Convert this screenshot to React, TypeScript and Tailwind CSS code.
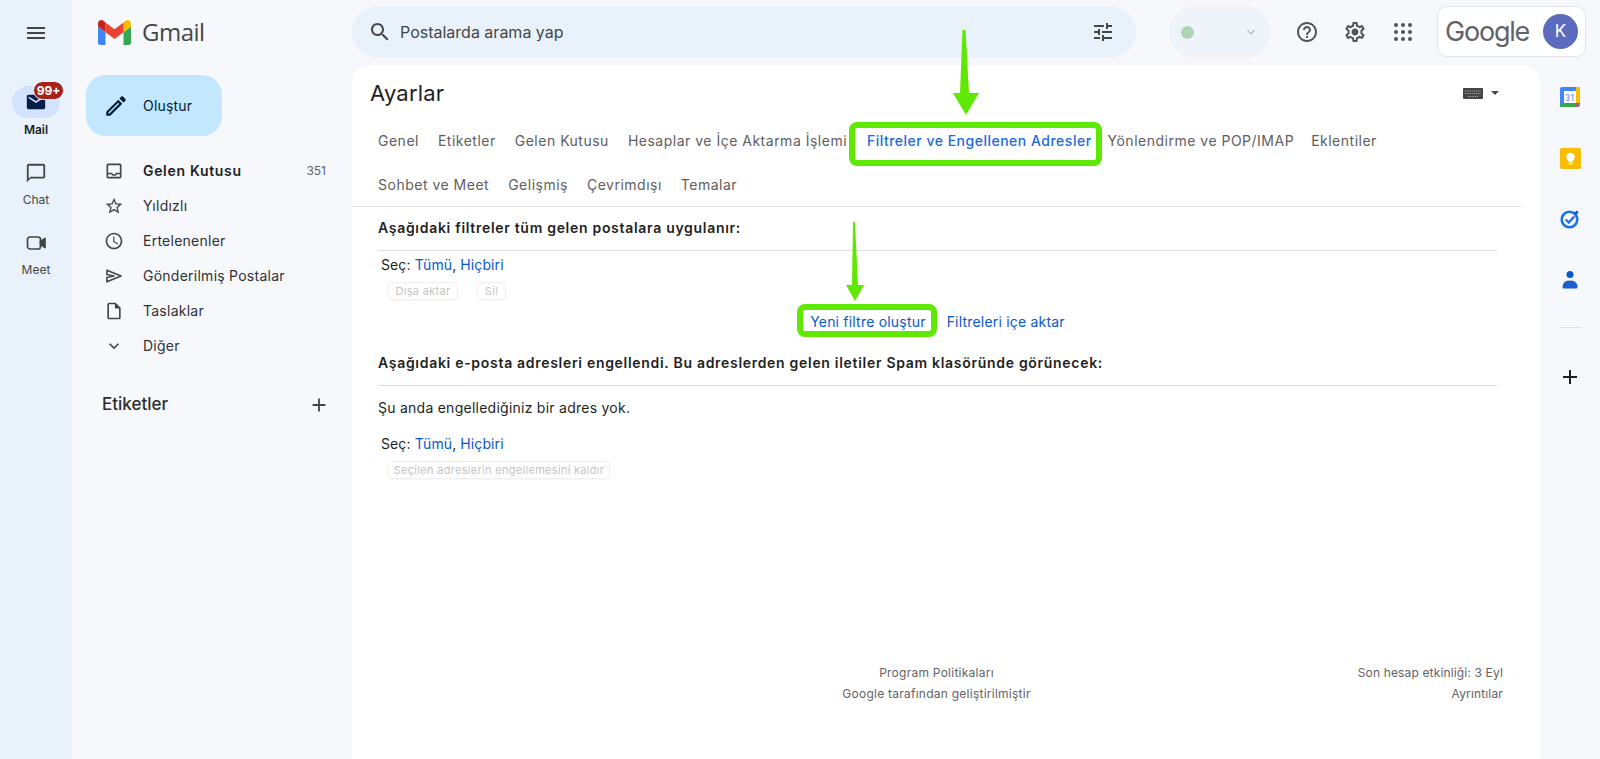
import React from "react";

const P = {
  menu: "M3 18h18v-2H3v2zm0-5h18v-2H3v2zm0-7v2h18V6H3z",
  search: "M15.5 14h-.79l-.28-.27C15.41 12.59 16 11.11 16 9.5 16 5.91 13.09 3 9.5 3S3 5.91 3 9.5 5.91 16 9.5 16c1.61 0 3.09-.59 4.23-1.57l.27.28v.79l5 4.99L20.49 19l-4.99-5zm-6 0C7.01 14 5 11.99 5 9.5S7.01 5 9.5 5 14 7.01 14 9.5 11.99 14 9.5 14z",
  tune: "M3 17v2h6v-2H3zM3 5v2h10V5H3zm10 16v-2h8v-2h-8v-2h-2v6h2zM7 9v2H3v2h4v2h2V9H7zm14 4v-2H11v2h10zm-6-4h2V7h4V5h-4V3h-2v6z",
  help: "M11 18h2v-2h-2v2zm1-16C6.48 2 2 6.48 2 12s4.48 10 10 10 10-4.48 10-10S17.52 2 12 2zm0 18c-4.41 0-8-3.59-8-8s3.59-8 8-8 8 3.59 8 8-3.59 8-8 8zm0-14c-2.21 0-4 1.79-4 4h2c0-1.1.9-2 2-2s2 .9 2 2c0 2-3 1.75-3 5h2c0-2.25 3-2.5 3-5 0-2.21-1.79-4-4-4z",
  gear: "M19.43 12.98c.04-.32.07-.64.07-.98 0-.34-.03-.66-.07-.98l2.11-1.65c.19-.15.24-.42.12-.64l-2-3.46c-.09-.16-.26-.25-.44-.25-.06 0-.12.01-.17.03l-2.49 1c-.52-.4-1.08-.73-1.69-.98l-.38-2.65C14.46 2.18 14.25 2 14 2h-4c-.25 0-.46.18-.49.42l-.38 2.65c-.61.25-1.17.59-1.69.98l-2.49-1c-.06-.02-.12-.03-.18-.03-.17 0-.34.09-.43.25l-2 3.46c-.13.22-.07.49.12.64l2.11 1.65c-.04.32-.07.65-.07.98 0 .33.03.66.07.98l-2.11 1.65c-.19.15-.24.42-.12.64l2 3.46c.09.16.26.25.44.25.06 0 .12-.01.17-.03l2.49-1c.52.4 1.08.73 1.69.98l.38 2.65c.03.24.24.42.49.42h4c.25 0 .46-.18.49-.42l.38-2.65c.61-.25 1.17-.59 1.69-.98l2.49 1c.06.02.12.03.18.03.17 0 .34-.09.43-.25l2-3.46c.12-.22.07-.49-.12-.64l-2.11-1.65zm-1.98-1.71c.04.31.05.52.05.73 0 .21-.02.43-.05.73l-.14 1.13.89.7 1.08.84-.7 1.21-1.27-.51-1.04-.42-.9.68c-.43.32-.84.56-1.25.73l-1.06.43-.16 1.13-.2 1.35h-1.4l-.19-1.35-.16-1.13-1.06-.43c-.43-.18-.83-.41-1.23-.71l-.91-.7-1.06.43-1.27.51-.7-1.21 1.08-.84.89-.7-.14-1.13c-.03-.31-.05-.54-.05-.74s.02-.43.05-.73l.14-1.13-.89-.7-1.08-.84.7-1.21 1.27.51 1.04.42.9-.68c.43-.32.84-.56 1.25-.73l1.06-.43.16-1.13.2-1.35h1.39l.19 1.35.16 1.13 1.06.43c.43.18.83.41 1.23.71l.91.7 1.06-.43 1.27-.51.7 1.21-1.07.85-.89.7.14 1.13zM12 8.500c-1.93 0-3.500 1.570-3.500 3.500s1.570 3.500 3.500 3.500 3.500-1.570 3.500-3.500-1.570-3.500-3.500-3.500z",
  mail: "M20 4H4c-1.1 0-1.99.9-1.99 2L2 18c0 1.1.9 2 2 2h16c1.1 0 2-.9 2-2V6c0-1.1-.9-2-2-2zm0 4l-8 5-8-5V6l8 5 8-5v2z",
  chat: "M20 2H4c-1.1 0-2 .9-2 2v18l4-4h14c1.1 0 2-.9 2-2V4c0-1.1-.9-2-2-2zm0 14H6l-2 2V4h16v12z",
  inbox: "M19 3H5c-1.1 0-2 .9-2 2v14c0 1.1.9 2 2 2h14c1.1 0 2-.9 2-2V5c0-1.1-.9-2-2-2zm0 16H5v-3h3.56c.69 1.19 1.97 2 3.45 2s2.75-.81 3.45-2H19v3zm0-5h-4.99c0 1.1-.9 2-2 2s-2-.9-2-2H5V5h14v9z",
  star: "M22 9.24l-7.19-.62L12 2 9.19 8.63 2 9.24l5.46 4.73L5.82 21 12 17.27 18.18 21l-1.63-7.03L22 9.24zM12 15.4l-3.76 2.27 1-4.28-3.32-2.88 4.38-.38L12 6.1l1.71 4.04 4.38.38-3.32 2.88 1 4.28L12 15.4z",
  clock: "M11.99 2C6.47 2 2 6.48 2 12s4.47 10 9.99 10C17.52 22 22 17.52 22 12S17.52 2 11.99 2zM12 20c-4.42 0-8-3.58-8-8s3.58-8 8-8 8 3.58 8 8-3.58 8-8 8zm.5-13H11v6l5.25 3.15.75-1.23-4.5-2.67z",
  draft: "M14 2H6c-1.1 0-1.99.9-1.99 2L4 20c0 1.1.89 2 1.99 2H18c1.1 0 2-.9 2-2V8l-6-6zM6 20V4h7v5h5v11H6z",
  chevron: "M16.59 8.59L12 13.17 7.41 8.59 6 10l6 6 6-6z",
  plus: "M19 13h-6v6h-2v-6H5v-2h6V5h2v6h6v2z",
  pencil: "M3 17.25V21h3.75L17.81 9.94l-3.75-3.75L3 17.25zM5.92 19H5v-.92l9.06-9.06.92.92L5.92 19zM20.71 5.63l-2.34-2.34c-.2-.2-.45-.29-.71-.29s-.51.1-.7.29l-1.83 1.83 3.75 3.75 1.83-1.83c.39-.39.39-1.02 0-1.41z",
};

function Icon({ d, className }: { d: string; className: string }) {
  return (
    <svg viewBox="0 0 24 24" fill="currentColor" className={className}>
      <path d={d} fillRule="evenodd" />
    </svg>
  );
}

function SendIcon() {
  return (
    <svg viewBox="0 0 24 24" fill="none" stroke="currentColor" strokeWidth="1.9" strokeLinejoin="round" className="w-[20px] h-[20px] text-[#444746]">
      <path d="M3.500 5l17 7-17 7v-5.200L12 12 3.500 10.200z" />
    </svg>
  );
}

function VideoIcon() {
  return (
    <svg viewBox="0 0 24 24" fill="none" stroke="currentColor" strokeWidth="1.700" strokeLinejoin="round" className="mt-[22px] w-6 h-6 text-[#444746]">
      <rect x="3.500" y="6" width="13" height="12" rx="2.500" />
      <path d="M16.500 10.500 21 7.500v9l-4.500-3z" fill="currentColor" />
    </svg>
  );
}

function Rail() {
  return (
    <div className="w-[72px] shrink-0 bg-[#e9f1fb] flex flex-col items-center">
      <div className="h-[66px] flex items-center justify-center">
        <Icon d={P.menu} className="w-6 h-6 text-[#444746]" />
      </div>
      <div className="relative mt-[20px] w-[48px] h-[32px] rounded-full bg-[#d3e3fd] flex items-center justify-center">
        <Icon d={P.mail} className="w-[22px] h-[22px] text-[#041e49]" />
        <div className="absolute left-[21px] top-[-5px] w-[31px] h-[19px] rounded-full bg-[#a8201a] border border-[#e9f1fb] text-white text-[12px] font-bold leading-[17px] text-center">99+</div>
      </div>
      <div className="mt-[3px] h-[18px] text-[12px] leading-[18px] font-semibold text-[#1f1f1f]">Mail</div>
      <Icon d={P.chat} className="mt-[23px] w-[22px] h-[22px] text-[#444746]" />
      <div className="mt-[7px] h-[18px] text-[12px] leading-[18px] text-[#444746]">Chat</div>
      <VideoIcon />
      <div className="mt-[6px] h-[18px] text-[12px] leading-[18px] text-[#444746]">Meet</div>
    </div>
  );
}

function TopBar() {
  return (
    <div className="h-[66px] shrink-0 flex items-start">
      <div className="w-[280px] h-[64px] shrink-0 flex items-center pl-[26px]">
        <svg viewBox="52 42 88 66" className="w-[33px] h-[25px]">
          <path fill="#4285f4" d="M58 108h14V74L52 59v43c0 3.32 2.69 6 6 6" />
          <path fill="#34a853" d="M120 108h14c3.32 0 6-2.69 6-6V59l-20 15" />
          <path fill="#fbbc04" d="M120 48v26l20-15v-8c0-7.42-8.47-11.65-14.4-7.2" />
          <path fill="#ea4335" d="M72 74V48l24 18 24-18v26L96 92" />
          <path fill="#c5221f" d="M52 51v8l20 15V48l-5.6-4.2c-5.94-4.45-14.4-.22-14.4 7.2" />
        </svg>
        <span className="ml-[11px] text-[24px] text-[#444746] font-['Open_Sans',sans-serif] tracking-[-0.5px]">Gmail</span>
      </div>
      <div className="mt-[6px] w-[784px] h-[52px] shrink-0 rounded-[26px] bg-[#e9f1fb] flex items-center pl-[16px] pr-[21px]">
        <Icon d={P.search} className="w-6 h-6 text-[#444746]" />
        <span className="ml-[8px] text-[16px] text-[#444746]">Postalarda arama yap</span>
        <Icon d={P.tune} className="ml-auto w-6 h-6 text-[#444746]" />
      </div>
      <div className="ml-[33px] mt-[6px] w-[101px] h-[52px] shrink-0 rounded-[26px] bg-[#eff4fb] flex items-center pl-[12px] pr-[11px]">
        <div className="w-[13px] h-[13px] rounded-full bg-[#aed4b5]" />
        <Icon d={P.chevron} className="ml-auto w-[16px] h-[16px] text-[#b9c0c8]" />
      </div>
      <div className="ml-[25px] mt-[20px] flex items-center gap-[24px] text-[#50555a]">
        <Icon d={P.help} className="w-6 h-6" />
        <Icon d={P.gear} className="w-6 h-6" />
        <svg viewBox="0 0 20 20" fill="currentColor" className="mx-[2px] w-[20px] h-[20px]">
          {[3, 10, 17].map((y) => [3, 10, 17].map((x) => <circle key={`${x}-${y}`} cx={x} cy={y} r="2" />))}
        </svg>
      </div>
      <div className="ml-[22px] mt-[6px] w-[149px] h-[51px] shrink-0 rounded-[10px] bg-white border border-[#e1e3e8] flex items-center pl-[7px]">
        <span className="text-[27px] leading-none text-[#5f6368] tracking-[-1.2px]">Google</span>
        <div className="ml-auto mr-[7px] w-[35px] h-[35px] rounded-full bg-[#5c6bc0] text-white text-[17px] flex items-center justify-center">K</div>
      </div>
    </div>
  );
}

const navItems = [
  { d: P.inbox, t: "Gelen Kutusu", bold: true, count: "351" },
  { d: P.star, t: "Yıldızlı" },
  { d: P.clock, t: "Ertelenenler" },
  { d: "", t: "Gönderilmiş Postalar" },
  { d: P.draft, t: "Taslaklar" },
  { d: P.chevron, t: "Diğer" },
];

function Sidebar() {
  return (
    <div className="w-[280px] shrink-0 flex flex-col">
      <div className="ml-[14px] mt-[9px] w-[136px] h-[61px] rounded-[20px] bg-[#c2e7ff] flex items-center pl-[17px] text-[#001d35]">
        <Icon d={P.pencil} className="w-[26px] h-[26px]" />
        <span className="ml-[14px] text-[14px] tracking-[0.2px]">Oluştur</span>
      </div>
      <div className="mt-[17px] flex flex-col">
        {navItems.map((n) => (
          <div key={n.t} className="h-[35px] flex items-center pl-[32px] pr-[26px] text-[14px] text-[#303134]">
            {n.d ? <Icon d={n.d} className="w-[20px] h-[20px] text-[#444746]" /> : <SendIcon />}
            <span className={n.bold ? "ml-[19px] font-semibold tracking-[0.68px] text-[#1f1f1f]" : "ml-[19px] tracking-[0.25px]"}>{n.t}</span>
            {n.count && <span className="ml-auto text-[12px] text-[#5f6368]">{n.count}</span>}
          </div>
        ))}
      </div>
      <div className="mt-[22px] h-[40px] flex items-center justify-between pl-[30px] pr-[22px]">
        <span className="text-[17px] font-medium text-[#2d2e30]">Etiketler</span>
        <Icon d={P.plus} className="w-[22px] h-[22px] text-[#444746]" />
      </div>
    </div>
  );
}

function TabRow({ children, className }: { children: React.ReactNode; className: string }) {
  return <div className={`h-[42px] pb-[2px] flex items-center pl-[26px] text-[14px] tracking-[0.5px] text-[#5e5e5e] whitespace-nowrap ${className}`}>{children}</div>;
}

function Ghost({ t, className }: { t: string; className: string }) {
  return (
    <div className={`h-[18px] rounded-[4px] border border-[#f0f0f0] text-[11px] leading-[16px] tracking-[0.3px] text-center text-[#c4c4c4] shadow-[0_1px_1px_rgba(0,0,0,0.04)] ${className}`}>{t}</div>
  );
}

function Select() {
  return (
    <div className="h-[28px] pb-[2px] flex items-center pl-[3px] text-[14px] tracking-[0.1px] text-[#1f1f1f]">
      Seç:&nbsp;<span className="text-[#0b57d0]">Tümü</span>,&nbsp;<span className="text-[#0b57d0]">Hiçbiri</span>
    </div>
  );
}

function Settings() {
  return (
    <div className="relative flex-1 bg-white rounded-t-2xl flex flex-col">
      <div className="h-[54px] flex items-center pl-[18px] pr-[41px]">
        <span className="mt-[1px] text-[22px] tracking-[0.2px] text-[#1f1f1f]">Ayarlar</span>
        <svg viewBox="0 0 20 11" className="ml-auto w-[20px] h-[11px]">
          <rect width="20" height="11" rx="1" fill="#444746" />
          <path d="M2 3h16M2 5.500h16M5 8.500h10" stroke="#a8abb0" strokeWidth="1" strokeDasharray="1 0.8" />
        </svg>
        <div className="ml-[8px] w-0 h-0 border-x-[4px] border-x-transparent border-t-[4px] border-t-[#444746]" />
      </div>
      <div className="mr-[18px] border-b border-[#e8e8e8]">
        <TabRow className="gap-[19px]">
          <span>Genel</span>
          <span>Etiketler</span>
          <span>Gelen Kutusu</span>
          <span className="w-[222px]">Hesaplar ve İçe Aktarma İşlemi</span>
          <span className="-ml-[2px] text-[#1b6ae0] font-medium">Filtreler ve Engellenen Adresler</span>
          <span className="-ml-[3px]">Yönlendirme ve POP/IMAP</span>
          <span className="-ml-[2px]">Eklentiler</span>
        </TabRow>
        <TabRow className="gap-[19px] mt-[2px]">
          <span>Sohbet ve Meet</span>
          <span>Gelişmiş</span>
          <span>Çevrimdışı</span>
          <span>Temalar</span>
        </TabRow>
      </div>
      <div className="ml-[26px] w-[1119px] text-[14px]">
        <div className="h-[44px] pb-[3px] flex items-center border-b border-[#e0e0e0] font-semibold tracking-[0.7px] text-[#1f1f1f]">Aşağıdaki filtreler tüm gelen postalara uygulanır:</div>
        <Select />
        <div className="mt-[3px] ml-[10px] flex gap-[19px]">
          <Ghost t="Dışa aktar" className="w-[70px]" />
          <Ghost t="Sil" className="w-[29px]" />
        </div>
        <div className="mt-[5px] h-[34px] pb-[2px] flex items-center justify-center gap-[21px] tracking-[0.2px] text-[#0b57d0]">
          <span>Yeni filtre oluştur</span>
          <span>Filtreleri içe aktar</span>
        </div>
        <div className="mt-[3px] h-[44px] pb-[2px] flex items-center border-b border-[#e0e0e0] font-semibold tracking-[0.7px] text-[#1f1f1f]">Aşağıdaki e-posta adresleri engellendi. Bu adreslerden gelen iletiler Spam klasöründe görünecek:</div>
        <div className="h-[44px] pb-[2px] flex items-center tracking-[0.25px] text-[#1f1f1f]">Şu anda engellediğiniz bir adres yok.</div>
        <Select />
        <div className="mt-[3px] ml-[10px]">
          <Ghost t="Seçilen adreslerin engellemesini kaldır" className="w-[222px]" />
        </div>
      </div>
      <div className="mt-auto mb-[55px] pl-[18px] pr-[37px] grid grid-cols-3 text-[12px] leading-[21px] tracking-[0.25px] text-[#5f6368]">
        <div />
        <div className="text-center">
          <div>Program Politikaları</div>
          <div>Google tarafından geliştirilmiştir</div>
        </div>
        <div className="text-right tracking-[0.15px]">
          <div>Son hesap etkinliği: 3 Eyl</div>
          <div>Ayrıntılar</div>
        </div>
      </div>

      <div className="absolute left-[497px] top-[56px] w-[253px] h-[44px] rounded-[8px] border-[6px] border-[#5fe800]" />
      <div className="absolute left-[445px] top-[238px] w-[140px] h-[33px] rounded-[8px] border-[6px] border-[#5fe800]" />
      <svg className="absolute left-[590px] top-[-40px] overflow-visible" width="40" height="95" viewBox="0 0 40 95">
        <path fill="#5fe800" d="M20.5 4 L23.500 4 L27 67 L37 67 L24 89 L11 67 L18 67 Z" />
      </svg>
      <svg className="absolute left-[490px] top-[153px] overflow-visible" width="24" height="82" viewBox="0 0 24 82">
        <path fill="#5fe800" d="M11 3 L13 3 L16 66 L22 66 L13 82 L4 66 L10 66 Z" />
      </svg>
    </div>
  );
}

function RightRail() {
  return (
    <div className="w-[60px] shrink-0 flex flex-col items-center">
      <svg viewBox="0 0 20 20" className="mt-[21px] w-[20px] h-[20px]">
        <rect width="20" height="20" rx="2" fill="#4285f4" />
        <rect x="16" y="0" width="4" height="16" fill="#fbbc04" />
        <rect x="0" y="16" width="16" height="4" fill="#34a853" />
        <path d="M16 16h4l-4 4z" fill="#ea4335" />
        <rect x="4" y="4" width="12" height="12" fill="#fff" />
        <text x="10" y="13.5" textAnchor="middle" fontSize="8.5" fill="#4285f4" fontFamily="Roboto">31</text>
      </svg>
      <svg viewBox="0 0 21 21" className="mt-[41px] w-[21px] h-[21px]">
        <rect width="21" height="21" rx="2" fill="#fbbc04" />
        <circle cx="10.5" cy="9" r="4.2" fill="#fff" />
        <rect x="8.5" y="12" width="4" height="2.4" fill="#fff" />
        <rect x="8.5" y="15" width="4" height="1.2" fill="#fff" />
      </svg>
      <svg viewBox="0 0 20 20" className="mt-[40px] w-[20px] h-[20px]">
        <circle cx="9.5" cy="10.5" r="7.8" fill="none" stroke="#1a73e8" strokeWidth="2.6" />
        <path d="M5.8 10.5l3 3 5.5-6" fill="none" stroke="#1a73e8" strokeWidth="2.4" />
        <path d="M14 3.5l3.5-2 1 2-2.5 2.500z" fill="#0b57d0" />
      </svg>
      <svg viewBox="0 0 20 20" className="mt-[41px] w-[20px] h-[20px]">
        <circle cx="10" cy="4.500" r="3.5" fill="#0b57d0" />
        <path d="M2.500 18c0-4 1.500-7.500 7.500-7.500s7.500 3.500 7.500 6.500c0 1-.8 1.500-1.500 1.500H3.500c-.5 0-1-.2-1-.5z" fill="#1a5fd0" />
      </svg>
      <div className="mt-[37px] w-[21px] h-px bg-[#dfe1e5]" />
      <Icon d={P.plus} className="mt-[37px] w-6 h-6 text-[#1f1f1f]" />
    </div>
  );
}

export default function App() {
  return (
    <div className="h-[759px] flex overflow-hidden bg-[#f6f8fc] font-['Inter',sans-serif]">
      <Rail />
      <div className="flex-1 flex flex-col min-w-0">
        <TopBar />
        <div className="flex-1 flex min-h-0">
          <Sidebar />
          <Settings />
          <RightRail />
        </div>
      </div>
    </div>
  );
}
